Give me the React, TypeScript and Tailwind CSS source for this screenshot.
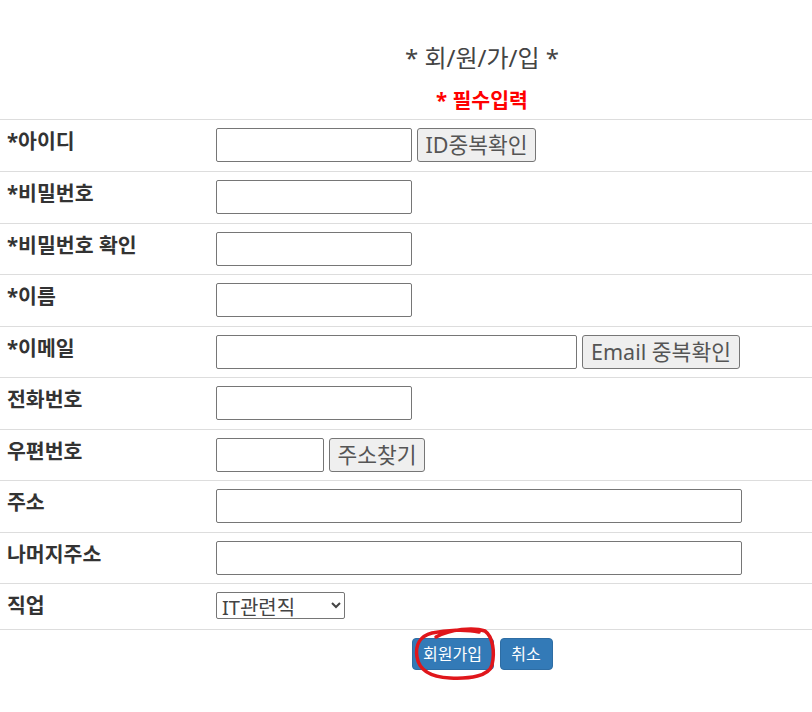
import React from "react";

const font = { fontFamily: '"Noto Sans","Noto Sans CJK KR",sans-serif' };

function Row({ h, label, children }: { h: string; label: string; children: React.ReactNode }) {
  return (
    <div className={`flex border-t border-[#dddddd] box-border ${h}`}>
      <div className="w-[208px] shrink-0 pl-[7px] pt-[8px] text-[20.5px] leading-[26px] font-bold text-[#333333]">
        {label}
      </div>
      <div className="flex items-start gap-[5px] pt-[8px] pl-[8px]">{children}</div>
    </div>
  );
}

const inputCls =
  "h-[34px] border border-[#767676] rounded-[2px] bg-white box-border outline-none";
const btnCls =
  "h-[34px] border border-[#767676] rounded-[3px] bg-[#efefef] box-border text-[21.5px] leading-[30px] text-[#555555] text-center whitespace-nowrap";

export default function App() {
  return (
    <div className="w-[812px] h-[712px] bg-white relative" style={font}>
      <div className="pt-[41px]">
        <div className="ml-[152px] h-[34px] text-center text-[24px] leading-[34px] text-[#444444]">
          * 회/원/가/입 *
        </div>
        <div className="ml-[152px] mt-[11px] h-[26px] text-center text-[20.5px] leading-[28px] font-bold text-[#ff0000]">
          * 필수입력
        </div>
      </div>
      <div className="mt-[7px]">
        <Row h="h-[52px]" label="*아이디">
          <input className={`${inputCls} w-[196px]`} />
          <button className={`${btnCls} w-[119px]`}>ID중복확인</button>
        </Row>
        <Row h="h-[52px]" label="*비밀번호">
          <input type="password" className={`${inputCls} w-[196px]`} />
        </Row>
        <Row h="h-[51px]" label="*비밀번호 확인">
          <input type="password" className={`${inputCls} w-[196px]`} />
        </Row>
        <Row h="h-[52px]" label="*이름">
          <input className={`${inputCls} w-[196px]`} />
        </Row>
        <Row h="h-[51px]" label="*이메일">
          <input className={`${inputCls} w-[361px]`} />
          <button className={`${btnCls} w-[158px]`}>Email 중복확인</button>
        </Row>
        <Row h="h-[52px]" label="전화번호">
          <input className={`${inputCls} w-[196px]`} />
        </Row>
        <Row h="h-[51px]" label="우편번호">
          <input className={`${inputCls} w-[108px]`} />
          <button className={`${btnCls} w-[96px]`}>주소찾기</button>
        </Row>
        <Row h="h-[52px]" label="주소">
          <input className={`${inputCls} w-[526px]`} />
        </Row>
        <Row h="h-[51px]" label="나머지주소">
          <input className={`${inputCls} w-[526px]`} />
        </Row>
        <Row h="h-[46px]" label="직업">
          <select
            defaultValue="IT관련직"
            className="w-[129px] h-[27px] border border-[#767676] rounded-[2px] bg-white text-[20px] leading-[24px] text-[#444444] box-border pl-[1px]"
          >
            <option>IT관련직</option>
            <option>학생</option>
            <option>기타</option>
          </select>
        </Row>
        <div className="border-t border-[#dddddd] pt-[8px]">
          <div className="flex justify-center gap-[6px] ml-[152px]">
            <button className="w-[82px] h-[32px] rounded-[4px] bg-[#337ab7] border border-[#2e6da4] text-white text-[16px] leading-[30px]">
              회원가입
            </button>
            <button className="w-[53px] h-[32px] rounded-[4px] bg-[#337ab7] border border-[#2e6da4] text-white text-[16px] leading-[30px]">
              취소
            </button>
          </div>
        </div>
      </div>
      <svg
        className="absolute left-0 top-0 pointer-events-none"
        width="812"
        height="712"
        viewBox="0 0 812 712"
      >
        <path
          d="M436 637 C450 629 474 627 485 631 C493 637 495 652 492 665 C489 676 470 679 450 678 C430 677 419 670 417 657 C415 645 420 636 432 633 C446 630 466 629 479 632"
          fill="none"
          stroke="#e0161b"
          strokeWidth="3.5"
          strokeLinecap="round"
        />
      </svg>
    </div>
  );
}
